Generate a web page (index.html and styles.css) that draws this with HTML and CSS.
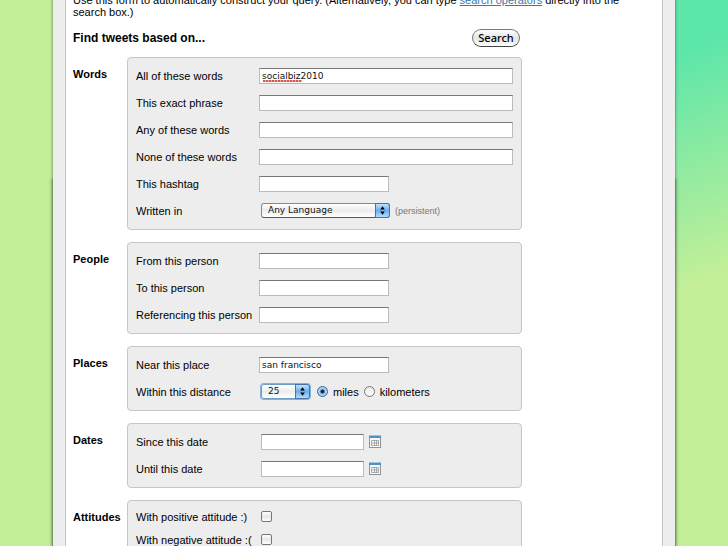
FILE: index.html
```
<!DOCTYPE html>
<html lang="en">
  <head>
    <meta charset="UTF-8" />
    <meta name="viewport" content="width=device-width, initial-scale=1" />
    <title>Advanced Search</title>
    <link rel="stylesheet" href="styles.css">
  </head>
  <body>
    <div class="frame">
      <main class="content">
        <p class="intro">Use this form to automatically construct your query. (Alternatively, you can type <a href="#operators">search operators</a> directly into the search box.)</p>

        <form class="search-form">
          <div class="form-head">
            <h1>Find tweets based on...</h1>
            <button type="submit">Search</button>
          </div>

          <section class="group">
            <h2>Words</h2>
            <div class="panel">
              <div class="row">
                <label for="all">All of these words</label>
                <input class="wide misspelled" type="text" id="all" value="socialbiz2010" spellcheck="false">
              </div>
              <div class="row">
                <label for="phrase">This exact phrase</label>
                <input class="wide" type="text" id="phrase">
              </div>
              <div class="row">
                <label for="any">Any of these words</label>
                <input class="wide" type="text" id="any">
              </div>
              <div class="row">
                <label for="none">None of these words</label>
                <input class="wide" type="text" id="none">
              </div>
              <div class="row">
                <label for="tag">This hashtag</label>
                <input type="text" id="tag">
              </div>
              <div class="row">
                <label for="lang">Written in</label>
                <div class="controls">
                  <span class="select language">
                    <select id="lang"><option>Any Language</option></select>
                    <svg viewBox="0 0 14 14"><path d="M4.500 6L7 2.500L9.500 6zM4.500 8L7 11.500L9.500 8z" /></svg>
                  </span>
                  <span class="note">(persistent)</span>
                </div>
              </div>
            </div>
          </section>

          <section class="group">
            <h2>People</h2>
            <div class="panel">
              <div class="row">
                <label for="from">From this person</label>
                <input type="text" id="from">
              </div>
              <div class="row">
                <label for="to">To this person</label>
                <input type="text" id="to">
              </div>
              <div class="row">
                <label for="ref">Referencing this person</label>
                <input type="text" id="ref">
              </div>
            </div>
          </section>

          <section class="group">
            <h2>Places</h2>
            <div class="panel">
              <div class="row">
                <label for="near">Near this place</label>
                <input type="text" id="near" value="san francisco" spellcheck="false">
              </div>
              <div class="row">
                <label for="within">Within this distance</label>
                <div class="controls">
                  <span class="select distance">
                    <select id="within"><option>25</option></select>
                    <svg viewBox="0 0 14 14"><path d="M4.500 6L7 2.500L9.500 6zM4.500 8L7 11.500L9.500 8z" /></svg>
                  </span>
                  <span class="units">
                    <input type="radio" name="units" id="mi" checked>
                    <label for="mi">miles</label>
                    <input type="radio" name="units" id="km">
                    <label for="km">kilometers</label>
                  </span>
                </div>
              </div>
            </div>
          </section>

          <section class="group">
            <h2>Dates</h2>
            <div class="panel">
              <div class="row">
                <label for="since">Since this date</label>
                <div class="controls">
                  <input class="date" type="text" id="since">
                  <svg class="calendar" viewBox="0 0 12 13">
                    <rect x="0.5" y="1.5" width="11" height="11" fill="#f8f8f8" stroke="#8d9499" />
                    <rect width="12" height="3" fill="#4d93c5" />
                    <rect width="12" height="1" fill="#9cc4e0" />
                    <path d="M2.500 5.500H9.500V10.500H2.500zM5.500 5V10.500M7.500 5V10.500M2.500 8H9.500" fill="none" stroke="#999" stroke-width="0.8" />
                  </svg>
                </div>
              </div>
              <div class="row">
                <label for="until">Until this date</label>
                <div class="controls">
                  <input class="date" type="text" id="until">
                  <svg class="calendar" viewBox="0 0 12 13">
                    <rect x="0.5" y="1.5" width="11" height="11" fill="#f8f8f8" stroke="#8d9499" />
                    <rect width="12" height="3" fill="#4d93c5" />
                    <rect width="12" height="1" fill="#9cc4e0" />
                    <path d="M2.500 5.500H9.500V10.500H2.500zM5.500 5V10.500M7.500 5V10.500M2.500 8H9.500" fill="none" stroke="#999" stroke-width="0.8" />
                  </svg>
                </div>
              </div>
            </div>
          </section>

          <section class="group">
            <h2>Attitudes</h2>
            <div class="panel checks">
              <div class="row">
                <label for="pos">With positive attitude :)</label>
                <div class="controls"><input type="checkbox" id="pos"></div>
              </div>
              <div class="row">
                <label for="neg">With negative attitude :(</label>
                <div class="controls"><input type="checkbox" id="neg"></div>
              </div>
            </div>
          </section>
        </form>
      </main>
    </div>
  </body>
</html>
```
FILE: styles.css
```
* {
  box-sizing: border-box;
}
body {
  margin: 0;
  height: 100vh;
  overflow: hidden;
  background: #c2ef98 linear-gradient(160deg, #5ce6aa 20%, #c2ef98 88%) no-repeat right top / 100px 310px;
  font-family: "Liberation Sans", Arial, sans-serif;
  font-size: 11px;
  line-height: 12px;
  color: #000;
}
.frame {
  position: relative;
  margin: -6px 53px 0;
  padding: 0 12px;
  background: #ededed;
  box-shadow: 0 0 3px #0008;
}
/* the lower part of the page casts a heavier shadow */
.frame::before {
  content: "";
  position: absolute;
  inset: 184px 0 0;
  box-shadow: 0 0 4px #0008;
  clip-path: inset(0 -6px);
  pointer-events: none;
}
.content {
  padding: 0 20px 20px 7px;
  background: #fff;
  border: solid #c4c4c4;
  border-width: 0 1px;
}
.intro {
  margin: 0;
  max-width: 560px;
}
a {
  color: #3a78a8;
}
.search-form {
  max-width: 449px;
}
.form-head {
  display: flex;
  align-items: center;
  justify-content: space-between;
  height: 39px;
  padding-right: 2px;
}
h1 {
  margin: 0;
  font-size: 12px;
}
button {
  width: 48px;
  height: 18px;
  padding: 0;
  font: 500 11px/14px "Noto Sans", sans-serif;
  color: #000;
  background: linear-gradient(#fff, #e4e4e4 50%, #fff);
  border: 1px solid #777;
  border-bottom-color: #444;
  border-radius: 9px;
}
.group {
  display: grid;
  grid-template-columns: 54px 1fr;
  margin-bottom: 12px;
}
h2 {
  margin: 11px 0 0;
  font-size: 11px;
}
.panel {
  padding: 4px 8px 5px;
  background: #ededed;
  border: 1px solid #c6c6c6;
  border-radius: 4px;
}
.row {
  display: grid;
  grid-template-columns: 123px 1fr;
  align-items: center;
  height: 27px;
}
.checks .row {
  height: 23px;
}
label {
  white-space: nowrap;
}
.controls {
  display: flex;
  align-items: center;
  padding-left: 2px;
}
input[type="text"] {
  width: 130px;
  height: 16px;
  padding: 0 2px;
  font: 9px/13px "DejaVu Sans", sans-serif;
  color: #111;
  background-color: #fff;
  border: 1px solid #bbb;
  border-top-color: #777;
  border-radius: 0;
}
input.wide {
  width: 100%;
}
input.date {
  width: 103px;
}
/* spelling mark under the first word */
input.misspelled {
  background-image: repeating-linear-gradient(90deg, #d9534a 0 2px, #f0b0a8 2px 3px);
  background-repeat: no-repeat;
  background-position: 3px 11px;
  background-size: 39px 2px;
}
.select {
  position: relative;
  display: flex;
}
select {
  appearance: none;
  width: 100%;
  height: 15px;
  padding: 0 6px;
  font: 9px/13px "DejaVu Sans", sans-serif;
  color: #111;
  background: linear-gradient(#fff, #ececec 50%, #fff);
  border: 1px solid #888;
  border-bottom-color: #555;
  border-radius: 3px;
}
.select svg {
  position: absolute;
  top: 0;
  right: 0;
  width: 15px;
  height: 15px;
  background: linear-gradient(#c4e1fa, #69aef0 50%, #b0deff);
  border: 1px solid #4a71a5;
  border-radius: 0 3px 3px 0;
  pointer-events: none;
}
.language {
  width: 129px;
}
.distance {
  width: 49px;
}
.distance select {
  border-color: #6e9cc9;
  box-shadow: 0 0 0 1px #7fb0de;
}
.note {
  margin-left: 5px;
  font-size: 9px;
  color: #777;
}
.units {
  display: flex;
  align-items: center;
  margin-left: 7px;
}
.units label {
  margin: 0 5px;
}
input[type="radio"] {
  appearance: none;
  width: 11px;
  height: 11px;
  margin: 0;
  background: linear-gradient(#e8e8e8, #fff);
  border: 1px solid #777;
  border-radius: 50%;
}
input[type="radio"]:checked {
  background: radial-gradient(#123 0 1px, #a4d2f8 3px);
  border-color: #3d6796;
}
.calendar {
  width: 12px;
  height: 13px;
  margin-left: 5px;
}
input[type="checkbox"] {
  appearance: none;
  width: 11px;
  height: 11px;
  margin: 0;
  background: linear-gradient(#fff, #e6e6e6 50%, #fff);
  border: 1px solid #777;
  border-radius: 2px;
}
```
